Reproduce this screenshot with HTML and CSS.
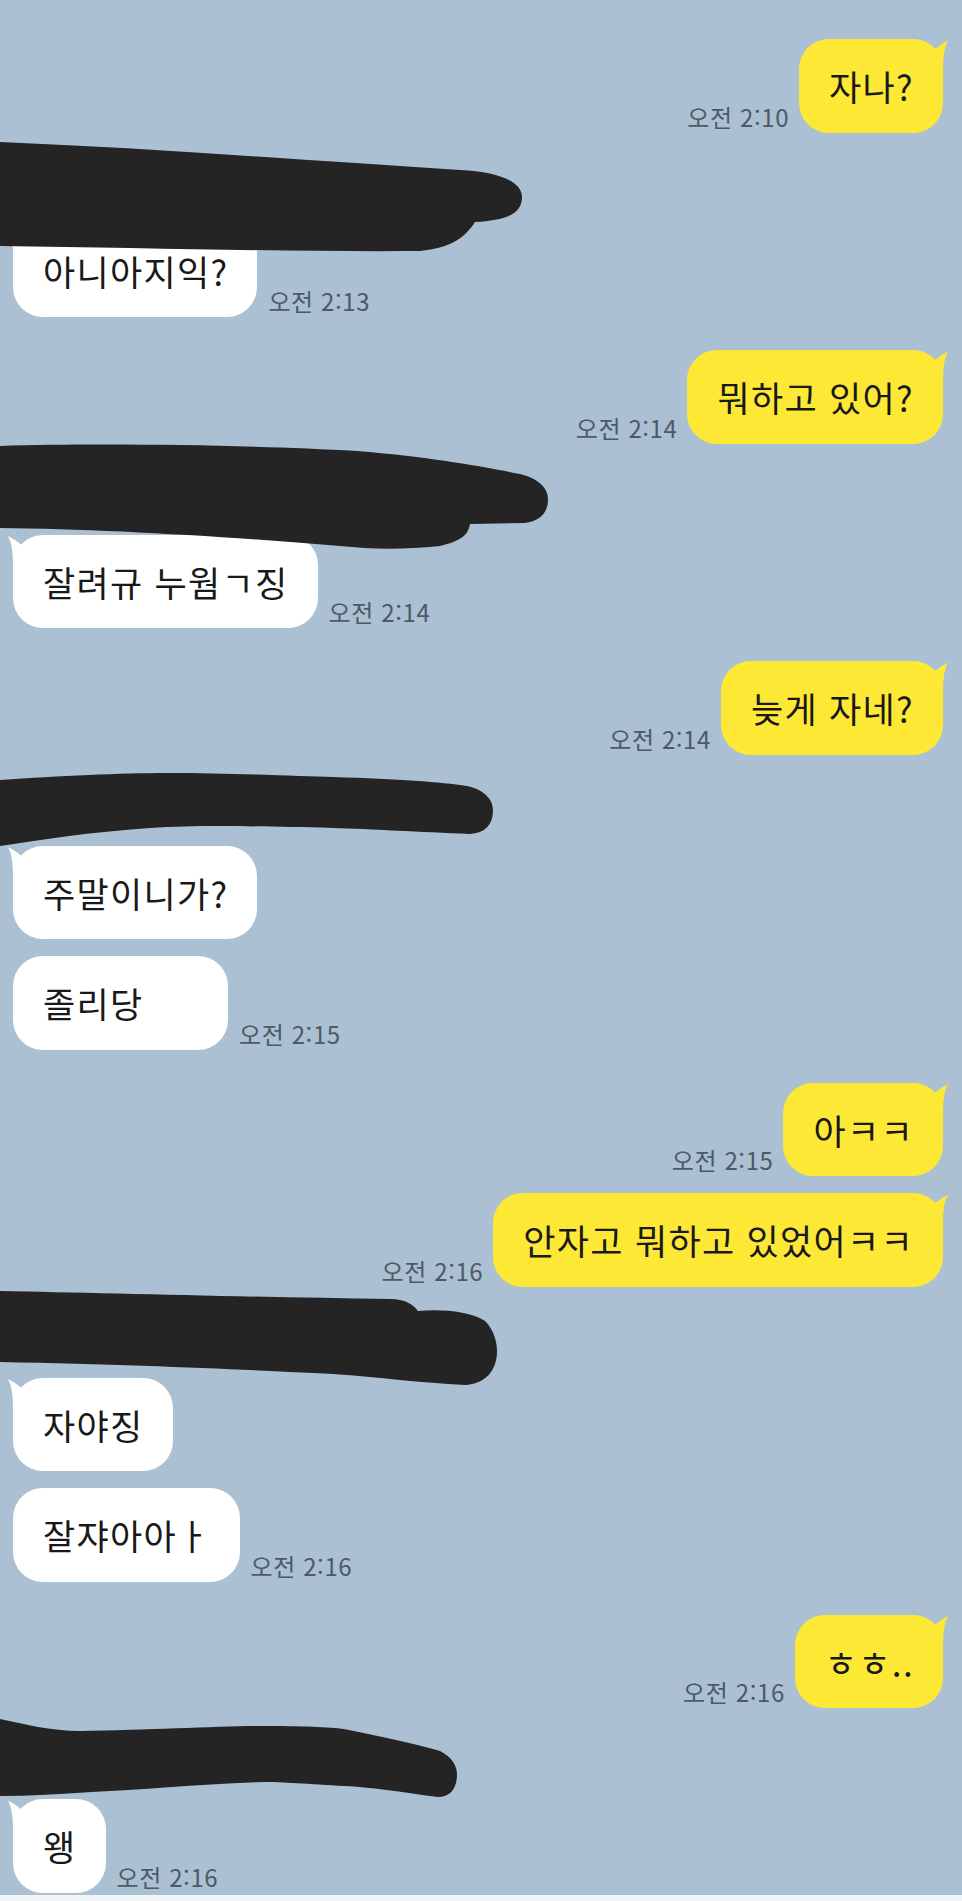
FILE: index.html
```html
<!DOCTYPE html>
<html lang="ko">
<head>
    <meta charset="UTF-8">
    <meta name="viewport" content="width=device-width, initial-scale=1.0">
    <title>채팅</title>
    <link rel="stylesheet" href="styles.css">
</head>
<body>
    <div class="chat">

        <div class="group">
            <div class="row out">
                <span class="time">오전 2:10</span>
                <div class="bubble out">자나?</div>
            </div>
        </div>

        <div class="group">
            <div class="name">
                <!-- name scribbled out -->
                <svg class="scribble s1" viewBox="0 0 525 115">
                    <path d="M0,2 C150,8 300,20 460,30 C500,32 522,42 522,57 C522,75 505,80 475,82 C465,98 450,108 420,111 C300,112 150,108 0,106 Z"/>
                </svg>
            </div>
            <div class="row in">
                <div class="bubble in">아니아지익?</div>
                <span class="time">오전 2:13</span>
            </div>
        </div>

        <div class="group">
            <div class="row out">
                <span class="time">오전 2:14</span>
                <div class="bubble out">뭐하고 있어?</div>
            </div>
        </div>

        <div class="group">
            <div class="name">
                <svg class="scribble s2" viewBox="0 0 550 110">
                    <path d="M0,3 C100,0 250,2 357,8 C430,14 480,23 520,31 C540,36 548,46 548,56 C548,70 540,78 525,80 L470,81 C468,93 460,98 440,103 C400,107 370,106 340,103 C220,93 100,86 0,85 Z"/>
                </svg>
            </div>
            <div class="row in">
                <div class="bubble in">잘려규 누웜ㄱ징</div>
                <span class="time">오전 2:14</span>
            </div>
        </div>

        <div class="group">
            <div class="row out">
                <span class="time">오전 2:14</span>
                <div class="bubble out">늦게 자네?</div>
            </div>
        </div>

        <div class="group">
            <div class="name">
                <svg class="scribble s3" viewBox="0 0 495 75">
                    <path d="M0,7 C60,3 120,0 167,0 C230,0 300,3 333,4 C400,6 440,9 467,13 C485,17 493,27 493,37 C493,52 485,60 470,61 C420,59 370,56 333,55 C250,53 200,52 150,55 C90,59 40,67 0,73 Z"/>
                </svg>
            </div>
            <div class="row in">
                <div class="bubble in">주말이니가?</div>
            </div>
            <div class="row in">
                <div class="bubble">졸리당&nbsp;&nbsp;&nbsp;&nbsp;&nbsp;</div>
                <span class="time">오전 2:15</span>
            </div>
        </div>

        <div class="group">
            <div class="row out">
                <span class="time">오전 2:15</span>
                <div class="bubble out">아ㅋㅋ</div>
            </div>
            <div class="row out">
                <span class="time">오전 2:16</span>
                <div class="bubble out">안자고 뭐하고 있었어ㅋㅋ</div>
            </div>
        </div>

        <div class="group">
            <div class="name">
                <svg class="scribble s4" viewBox="0 0 500 96">
                    <path d="M0,0 C100,2 250,6 390,8 C405,8 413,13 418,20 C440,18 470,20 485,30 C495,40 497,53 497,60 C497,80 485,93 465,94 C420,92 380,86 333,83 C250,79 150,74 0,71 Z"/>
                </svg>
            </div>
            <div class="row in">
                <div class="bubble in">자야징</div>
            </div>
            <div class="row in">
                <div class="bubble">잘쟈아아ㅏ</div>
                <span class="time">오전 2:16</span>
            </div>
        </div>

        <div class="group">
            <div class="row out">
                <span class="time">오전 2:16</span>
                <div class="bubble out">ㅎㅎ..</div>
            </div>
        </div>

        <div class="group">
            <div class="name">
                <svg class="scribble s5" viewBox="0 0 460 80">
                    <path d="M0,0 C25,5 50,12 80,12 C150,11 220,7 264,7 C300,7 330,8 344,10 C380,17 415,25 440,32 C452,38 457,47 457,55 C457,70 450,78 438,78 C400,73 370,68 344,67 C310,65 280,63 264,63 C200,65 140,71 92,73 C60,75 30,77 0,77 Z"/>
                </svg>
            </div>
            <div class="row in">
                <div class="bubble in">왱</div>
                <span class="time">오전 2:16</span>
            </div>
        </div>

    </div>
    <div class="composer"></div>
</body>
</html>
```
FILE: styles.css
```css
html, body {
    margin: 0;
    height: 1901px;
    overflow: hidden;
}

body {
    background-color: #abc0d2;
    font-family: "Noto Sans CJK KR", "Noto Sans", sans-serif;
    color: #191919;
}

.chat {
    display: flex;
    flex-direction: column;
    gap: 33px;
    padding-top: 39px;
}

.group {
    display: flex;
    flex-direction: column;
    gap: 17px;
}

.name {
    height: 41px;
    position: relative;
}

.scribble {
    position: absolute;
    left: 0;
    z-index: 2;
    fill: #242424;
}

.s1 { top: -26px; width: 525px; height: 115px; }
.s2 { top: -34px; width: 550px; height: 110px; }
.s3 { top: -15px; width: 495px; height: 75px; }
.s4 { top: -29px; width: 500px; height: 96px; }
.s5 { top: -22px; width: 460px; height: 80px; }

.row {
    display: flex;
    align-items: flex-end;
}

.row.out {
    justify-content: flex-end;
    padding-right: 19px;
    gap: 10px;
}

.row.in {
    padding-left: 13px;
    gap: 11px;
}

.bubble {
    position: relative;
    height: 93.5px;
    line-height: 93.5px;
    padding: 0 29px 0 30px;
    border-radius: 30px;
    background: #ffffff;
    font-size: 35px;
    letter-spacing: 1.3px;
    white-space: nowrap;
}

.bubble.out {
    background: #fee836;
}

/* the little ear on the first bubble of a turn */
.bubble.out::after,
.bubble.in::before {
    content: "";
    position: absolute;
    top: 0;
    width: 24px;
    height: 34px;
}

.bubble.out::after {
    right: -6px;
    background: #fee836;
    clip-path: path("M4,16 L10,10 Q16,5 23,1.5 Q18,10 18,30 L4,30 Z");
}

.bubble.in::before {
    left: -6px;
    background: #ffffff;
    clip-path: path("M20,16 L14,10 Q8,5 1,1.5 Q6,10 6,30 L20,30 Z");
}

.time {
    font-size: 24px;
    line-height: 28px;
    letter-spacing: 0.6px;
    margin-bottom: 2px;
    color: #4e5966;
    white-space: nowrap;
}

.composer {
    height: 20px;
    margin-top: 2px;
    background: #f2f6f7;
}
```
